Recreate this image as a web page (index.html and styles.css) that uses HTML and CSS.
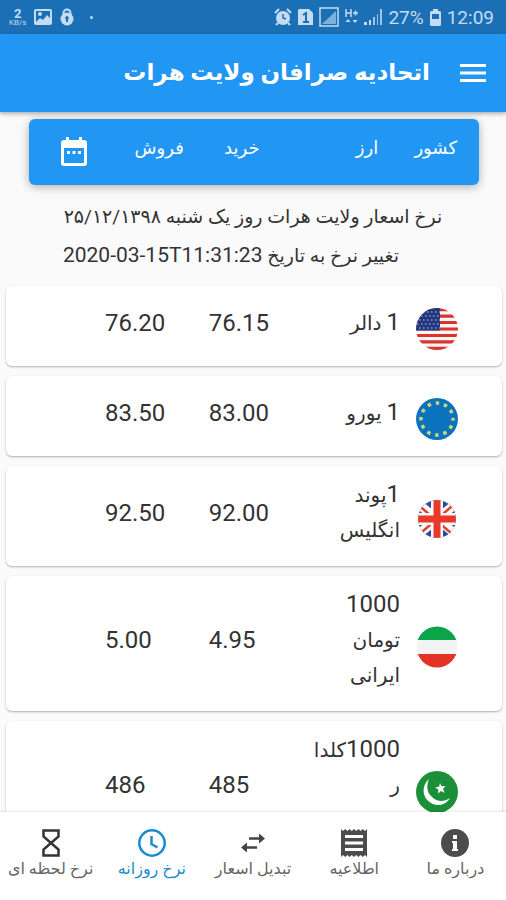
FILE: index.html
```html
<!DOCTYPE html>
<html lang="fa" dir="rtl">
<head>
  <meta charset="UTF-8" />
  <meta name="viewport" content="width=device-width, initial-scale=1" />
  <title>اتحادیه صرافان ولایت هرات</title>
  <link rel="stylesheet" href="styles.css">
</head>
<body>
  <div class="status-bar" dir="ltr">
    <div class="status-group">
      <span class="net-speed"><b>2</b><small>KB/s</small></span>
      <svg width="18" height="16" viewBox="0 0 18 16"><rect x="1" y="1" width="16" height="14" rx="1" fill="none" stroke="currentColor" stroke-width="2"/><circle cx="6" cy="5" r="2" fill="currentColor"/><path d="M2 13l4-4 3 2 4-5 4 4v4H2z" fill="currentColor"/></svg>
      <svg width="14" height="18" viewBox="0 0 14 18"><path d="M3.500 8V5a3.500 3.500 0 0 1 7 0v3" fill="none" stroke="currentColor" stroke-width="2"/><circle cx="7" cy="11" r="6.500" fill="currentColor"/><path d="M7 8a2 2 0 0 1 1 3.500V14H6v-2.500A2 2 0 0 1 7 8z" fill="#1b6fb5"/></svg>
      <span class="dot"></span>
    </div>
    <div class="status-group status-right">
      <svg width="18" height="18" viewBox="0 0 18 18"><circle cx="9" cy="10" r="7" fill="currentColor"/><path d="M1 5l4-4M17 5l-4-4M4 15l-2 2M14 15l2 2" stroke="currentColor" stroke-width="2"/><path d="M9 6v4l3 1" fill="none" stroke="#1b6fb5" stroke-width="1.500"/></svg>
      <svg width="15" height="18" viewBox="0 0 15 18"><path d="M1 1h10l4 4v12H0V2z" fill="currentColor"/><path d="M5 7l3-2v9M5 14h6" fill="none" stroke="#1b6fb5" stroke-width="2"/></svg>
      <svg width="20" height="20" viewBox="0 0 20 20"><rect x="1" y="1" width="18" height="18" fill="none" stroke="currentColor" stroke-width="1.500"/><path d="M3 17L17 4v13z" fill="currentColor" opacity=".6"/></svg>
      <svg width="13" height="18" viewBox="0 0 13 18"><path d="M1 1v8M6 1v8M1 5h5M8 5h5M10.500 2.500v5" stroke="currentColor" stroke-width="1.500"/><path d="M3 11l2.500 3h-5zM10 15l2.500-3h-5z" fill="currentColor"/></svg>
      <svg width="18" height="18" viewBox="0 0 18 18"><path d="M0 17v-3h3v3zM5 17v-5h2v5z" fill="currentColor"/><path d="M9 17V9h2v8zM13 17V6h1v11zM16 17V1h2v16z" fill="currentColor" opacity=".8"/></svg>
      <span>27%</span>
      <svg width="11" height="17" viewBox="0 0 11 17"><path d="M3 0h5v2h2l1 1v13l-1 1H1l-1-1V3l1-1h2z" fill="currentColor"/><path d="M2 5h7v5H2z" fill="#1b6fb5"/></svg>
      <span class="clock">12:09</span>
    </div>
  </div>

  <header class="app-bar">
    <button class="icon-btn" type="button" aria-label="منو">
      <svg width="26" height="20" viewBox="0 0 26 20"><path d="M0 2.500h26M0 10h26M0 17.500h26" stroke="currentColor" stroke-width="3"/></svg>
    </button>
    <h1>اتحادیه صرافان ولایت هرات</h1>
  </header>

  <main>
    <table class="rates">
      <thead>
        <tr class="rates-head">
          <th scope="col">کشور</th>
          <th scope="col">ارز</th>
          <th scope="col">خرید</th>
          <th scope="col">فروش</th>
          <td>
            <button class="icon-btn" type="button" aria-label="تقویم">
              <svg width="28" height="30" viewBox="0 0 28 30"><path d="M4 3h2V0h3v3h10V0h3v3h2a3 3 0 0 1 3 3v20a3 3 0 0 1-3 3H4a3 3 0 0 1-3-3V6a3 3 0 0 1 3-3zm0 8v15h20V11z" fill="currentColor" fill-rule="evenodd"/><path d="M7 14h3v3H7zM12.500 14h3v3h-3zM18 14h3v3h-3z" fill="currentColor"/></svg>
            </button>
          </td>
        </tr>
      </thead>
      <tbody>
        <tr class="rates-note">
          <td>
            <p>نرخ اسعار ولایت هرات روز یک شنبه ۲۵/۱۲/۱۳۹۸</p>
            <p class="changed">تغییر نرخ به تاریخ <time dir="ltr">2020-03-15T11:31:23</time></p>
          </td>
        </tr>
        <tr class="rate">
          <td class="flag">
            <svg viewBox="0 0 42 42">
              <clipPath id="round"><circle cx="21" cy="21" r="21"/></clipPath>
              <g clip-path="url(#round)">
                <path d="M0 0h42v42H0z" fill="#f5f5f5"/>
                <path d="M0 1.600h42M0 8.100h42M0 14.500h42M0 21h42M0 27.500h42M0 33.900h42M0 40.400h42" stroke="#d8352c" stroke-width="3.200"/>
                <path d="M0 0h24v22.500H0z" fill="#22387f"/>
                <path d="M3 4h21M1 8h23M3 12h21M1 16h23M3 20h21" stroke="#8595c4" stroke-width="1.300" stroke-dasharray="1.500 2.500"/>
              </g>
            </svg>
          </td>
          <td class="name"><b>1</b> دالر</td>
          <td>76.15</td>
          <td>76.20</td>
        </tr>
        <tr class="rate">
          <td class="flag">
            <svg viewBox="0 0 42 42">
              <circle cx="21" cy="21" r="21" fill="#0b72bd"/>
              <circle cx="21" cy="21" r="16" fill="none" stroke="#c9d67c" stroke-width="3.500" stroke-dasharray="3.500 4.878" stroke-dashoffset="1.750"/>
            </svg>
          </td>
          <td class="name"><b>1</b> یورو</td>
          <td>83.00</td>
          <td>83.50</td>
        </tr>
        <tr class="rate">
          <td class="flag">
            <svg viewBox="0 0 42 42">
              <clipPath id="round-uk"><circle cx="21" cy="21" r="19"/></clipPath>
              <g clip-path="url(#round-uk)">
                <path d="M0 0h42v42H0z" fill="#2b4a9b"/>
                <path d="M0 4l42 34M42 4L0 38" stroke="#fafafa" stroke-width="9"/>
                <path d="M0 5l21 18M42 3L21 21M0 39l21-18M42 41L21 23" stroke="#e0402f" stroke-width="2.500"/>
                <path d="M21 0v42M0 21h42" stroke="#fafafa" stroke-width="12"/>
                <path d="M21 0v42M0 21h42" stroke="#e8392b" stroke-width="7"/>
              </g>
            </svg>
          </td>
          <td class="name"><b>1</b>پوند انگلیس</td>
          <td>92.00</td>
          <td>92.50</td>
        </tr>
        <tr class="rate">
          <td class="flag">
            <svg viewBox="0 0 42 42">
              <clipPath id="round-ir"><circle cx="21" cy="21" r="20.500"/></clipPath>
              <g clip-path="url(#round-ir)">
                <path d="M0 0h42v42H0z" fill="#f3f3f3"/>
                <path d="M0 0h42v14H0z" fill="#0ba44b"/>
                <path d="M0 28h42v14H0z" fill="#e23325"/>
              </g>
            </svg>
          </td>
          <td class="name"><b>1000</b> تومان ایرانی</td>
          <td>4.95</td>
          <td>5.00</td>
        </tr>
        <tr class="rate rate-tall">
          <td class="flag">
            <svg viewBox="0 0 42 42">
              <circle cx="21" cy="21" r="21" fill="#1c9038"/>
              <path d="M13 8C5 15 6 27 15 32c7 4 15 2 19-5-6 4-13 4-18-1-5-4-6-11-3-18z" fill="#fff"/>
              <path d="M24 12l1.500 3.300 4-.3-2.500 3 1.700 3.700-3.700-1.700-3 2.500.4-4-3.400-2 4-.8z" fill="#fff"/>
            </svg>
          </td>
          <td class="name"><b>1000</b>کلدا<wbr>ر</td>
          <td>485</td>
          <td>486</td>
        </tr>
      </tbody>
    </table>
  </main>

  <nav class="tabs">
    <a href="#about">
      <svg width="28" height="28" viewBox="0 0 28 28"><circle cx="14" cy="14" r="14" fill="#4c4c4c"/><path d="M12 6h4v4h-4zM11 12h5v8h1v2h-6v-2h1v-6h-1z" fill="#fff"/></svg>
      <span>درباره ما</span>
    </a>
    <a href="#notices">
      <svg width="28" height="28" viewBox="0 0 28 28"><path d="M1 0l2 2 2.200-2 2.200 2 2.200-2 2.200 2L14 0l2.200 2 2.200-2 2.200 2 2.200-2L25 2l2-2v28l-2-2-2.200 2-2.200-2-2.200 2-2.200-2-2.200 2-2.200-2-2.200 2-2.200-2-2.200 2L3 26l-2 2z" fill="#4c4c4c"/><path d="M5 6h18v3H5zM5 12.500h18v3H5zM5 19h18v3H5z" fill="#fff"/></svg>
      <span>اطلاعیه</span>
    </a>
    <a href="#convert">
      <svg width="28" height="28" viewBox="0 0 28 28"><path d="M10 9.500h12M18 18.500H6" stroke="#444" stroke-width="2.500"/><path d="M20 4.500l6 5-6 5zM8 13.500l-6 5 6 5z" fill="#444"/></svg>
      <span>تبدیل اسعار</span>
    </a>
    <a href="#daily" class="active">
      <svg width="28" height="28" viewBox="0 0 28 28" fill="none" stroke="currentColor" stroke-width="2.500"><circle cx="14" cy="14" r="12.700"/><path d="M13.500 7v8l6 3.500"/></svg>
      <span>نرخ روزانه</span>
    </a>
    <a href="#live">
      <svg width="28" height="28" viewBox="0 0 28 28" fill="none" stroke="#333" stroke-width="2.500"><path d="M6.500 1.500h15v6L14 14l7.500 6.500v6h-15v-6L14 14 6.500 7.500z"/></svg>
      <span>نرخ لحظه ای</span>
    </a>
  </nav>
</body>
</html>
```

FILE: styles.css
```css
* {
  box-sizing: border-box;
}
body {
  margin: 0;
  height: 100vh;
  display: flex;
  flex-direction: column;
  background: #fafafa;
  color: #333;
  font-family: Roboto, "DejaVu Sans", sans-serif;
}
svg {
  display: block;
}

/* Status bar */
.status-bar {
  display: flex;
  justify-content: space-between;
  align-items: center;
  height: 34px;
  flex-shrink: 0;
  padding: 0 12px 0 9px;
  background: #1b6fb5;
  color: #c3dcf1;
  font-size: 19px;
}
.status-group {
  display: flex;
  align-items: center;
  gap: 8px;
}
.status-right {
  gap: 6px;
}
.net-speed {
  display: flex;
  flex-direction: column;
  align-items: center;
  font-size: 13px;
  line-height: 11px;
}
.net-speed small {
  font-size: 8px;
  line-height: 8px;
}
.dot {
  width: 3px;
  height: 3px;
  margin-left: 8px;
  border-radius: 50%;
  background: currentColor;
}

/* App bar */
.app-bar {
  display: flex;
  align-items: center;
  gap: 30px;
  height: 78px;
  flex-shrink: 0;
  padding: 0 20px;
  background: #2196f3;
  color: #fff;
  box-shadow: 0 2px 4px rgba(0, 0, 0, 0.3);
  z-index: 1;
}
.app-bar h1 {
  margin: 0;
  font-size: 23px;
  line-height: 36px;
  white-space: nowrap;
}
.icon-btn {
  padding: 0;
  border: none;
  background: none;
  color: inherit;
  cursor: pointer;
}

/* Rates */
main {
  flex: 1;
  min-height: 0;
  overflow: hidden;
}
.rates,
.rates thead,
.rates tbody {
  display: block;
}
.rates th,
.rates td {
  padding: 0;
}
.rates-head {
  display: grid;
  grid-template-columns: 79fr 119fr 76fr 96fr 28fr;
  height: 66px;
  margin: 7px 27px 0 29px;
  padding: 14px 22px 0 31px;
  border-radius: 6px;
  background: #2196f3;
  color: #fff;
  box-shadow: 0 2px 10px rgba(0, 0, 0, 0.3);
}
.rates-head th {
  font-size: 18px;
  font-weight: normal;
  line-height: 30px;
  text-align: right;
}
.rates-head td {
  padding-top: 4px;
}
.rates-note {
  display: block;
  padding: 13px 0 12px;
}
.rates-note td {
  display: block;
  font-size: 19px;
  line-height: 38px;
  text-align: center;
}
.rates-note p {
  height: 38px;
  margin: 0;
}
.rates-note .changed {
  padding-right: 44px;
}
.rates-note time {
  font-size: 21px;
}
.rate {
  display: grid;
  grid-template-columns: 42px repeat(3, 1fr);
  gap: 16px;
  align-items: center;
  margin: 0 4px 10px 6px;
  padding: 10px 44px 16px 99px;
  border-radius: 6px;
  background: #fff;
  box-shadow: 0 1px 2px rgba(0, 0, 0, 0.3);
}
.rate-tall {
  min-height: 135px;
}
.rate td {
  font-size: 24px;
  line-height: 35px;
  text-align: left;
  direction: ltr;
}
.rate .flag {
  padding-top: 12px;
}
.rate .name {
  padding: 2px 0;
  font-size: 20px;
  text-align: right;
  direction: rtl;
}
.rate-tall .name {
  align-self: start;
}
.name b {
  font-size: 24px;
  font-weight: normal;
  line-height: 24px;
}

/* Bottom tabs */
.tabs {
  display: grid;
  grid-template-columns: repeat(5, 1fr);
  height: 88px;
  flex-shrink: 0;
  padding-top: 17px;
  background: #fff;
  box-shadow: 0 -1px 2px rgba(0, 0, 0, 0.1);
  z-index: 1;
}
.tabs a {
  display: flex;
  flex-direction: column;
  align-items: center;
  color: #666;
  font-size: 16px;
  line-height: 24px;
  text-decoration: none;
  white-space: nowrap;
}
.tabs .active {
  color: #1a8bcb;
}
```
